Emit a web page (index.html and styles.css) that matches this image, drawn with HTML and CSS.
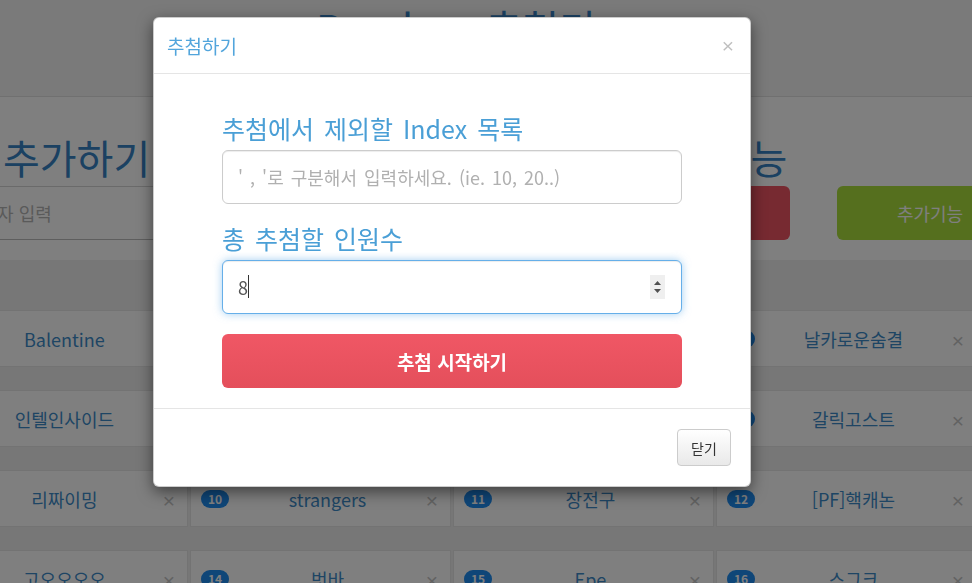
FILE: index.html
```html
<!DOCTYPE html>
<html lang="ko">
<head>
<meta charset="utf-8">
<title>Random 추첨기</title>
<link rel="stylesheet" href="styles.css">
</head>
<body>
<div class="page">
  <header class="top">
    <h1 class="title">Random 추첨기</h1>
  </header>
  <section class="controls">
    <div class="col-left">
      <h2 class="sec-title add-title">추가하기</h2>
      <input class="name-input" type="text" placeholder="참가자 입력">
    </div>
    <div class="col-right">
      <h2 class="sec-title extra-title">부가기능</h2>
      <div class="btn-row">
        <button class="btn-red" type="button">추첨하기</button>
        <button class="btn-green" type="button">추가기능</button>
      </div>
    </div>
  </section>
  <section class="list">
    <div class="grid">
      <div class="card"><span class="badge">1</span><span class="name">Balentine</span><span class="x">×</span></div>
      <div class="card"><span class="badge">2</span><span class="name">하늘바람</span><span class="x">×</span></div>
      <div class="card"><span class="badge">3</span><span class="name">달빛소나타</span><span class="x">×</span></div>
      <div class="card"><span class="badge">4</span><span class="name">날카로운숨결</span><span class="x">×</span></div>
      <div class="card"><span class="badge">5</span><span class="name">인텔인사이드</span><span class="x">×</span></div>
      <div class="card"><span class="badge">6</span><span class="name">초코우유</span><span class="x">×</span></div>
      <div class="card"><span class="badge">7</span><span class="name">바나나킥</span><span class="x">×</span></div>
      <div class="card"><span class="badge">8</span><span class="name">갈릭고스트</span><span class="x">×</span></div>
      <div class="card"><span class="badge">9</span><span class="name">리짜이밍</span><span class="x">×</span></div>
      <div class="card"><span class="badge">10</span><span class="name">strangers</span><span class="x">×</span></div>
      <div class="card"><span class="badge">11</span><span class="name">장전구</span><span class="x">×</span></div>
      <div class="card"><span class="badge">12</span><span class="name">[PF]핵캐논</span><span class="x">×</span></div>
      <div class="card"><span class="badge">13</span><span class="name">고오오오오</span><span class="x">×</span></div>
      <div class="card"><span class="badge">14</span><span class="name">벗바</span><span class="x">×</span></div>
      <div class="card"><span class="badge">15</span><span class="name">Epe</span><span class="x">×</span></div>
      <div class="card"><span class="badge">16</span><span class="name">스그크</span><span class="x">×</span></div>
    </div>
  </section>
</div>

<div class="backdrop"></div>

<div class="modal">
  <div class="modal-header">
    <span class="modal-title">추첨하기</span>
    <span class="modal-close">×</span>
  </div>
  <div class="modal-body">
    <div class="form">
      <label class="form-label">추첨에서 제외할 Index 목록</label>
      <input class="form-input" type="text" placeholder="' , '로 구분해서 입력하세요. (ie. 10, 20..)">
      <label class="form-label label-2">총 추첨할 인원수</label>
      <div class="num-wrap">
        <input class="form-input focused" type="text" value="8">
        <span class="caret"></span>
        <span class="spinner">
          <svg width="15" height="24" viewBox="0 0 15 24"><path d="M4 10 L7.5 6 L11 10 Z" fill="#505050"/><path d="M4 14 L11 14 L7.5 18 Z" fill="#505050"/></svg>
        </span>
      </div>
      <button class="btn-start" type="button">추첨 시작하기</button>
    </div>
  </div>
  <div class="modal-footer">
    <button class="btn-close" type="button">닫기</button>
  </div>
</div>
</body>
</html>
```

FILE: styles.css
```css
* { box-sizing: border-box; }

html, body {
  margin: 0;
  padding: 0;
  width: 972px;
  height: 583px;
  overflow: hidden;
  background: #fff;
  font-family: "Noto Sans CJK KR", "Noto Sans", sans-serif;
}

.page {
  margin-left: -74px;
  width: 1100px;
}

/* header */
.top {
  height: 97px;
  background: #f4f4f4;
  border-bottom: 1px solid #e0e0e0;
  padding-top: 2px;
  padding-left: 10px;
  width: 1050px;
}
.title {
  margin: 0;
  font-size: 40px;
  line-height: 50px;
  font-weight: 400;
  color: #3683c4;
  text-align: center;
}

/* controls */
.controls {
  display: flex;
  padding-top: 35px;
  padding-bottom: 20px;
}
.col-left {
  width: 678px;
  padding-left: 25px;
}
.col-right {
  flex: 1;
}
.sec-title {
  margin: 0;
  font-size: 40px;
  line-height: 50px;
  font-weight: 400;
  color: #3683c4;
}
.add-title { padding-left: 52px; }
.extra-title {
  padding-left: 24px;
  letter-spacing: 4px;
}

.name-input {
  display: block;
  margin-top: 4px;
  width: 600px;
  height: 54px;
  border: 1px solid #d4d4d4;
  border-bottom-color: #bcbcbc;
  padding: 0 12px;
  font-family: inherit;
  font-size: 18px;
  outline: none;
}
.name-input::placeholder { color: #b4b4b4; }

.btn-row {
  margin-top: 4px;
  display: grid;
  grid-template-columns: 186px 186px;
  column-gap: 47px;
}
.btn-red, .btn-green {
  height: 54px;
  border: none;
  border-radius: 6px;
  color: #fff;
  font-family: inherit;
  font-size: 18px;
}
.btn-red { background: #ef5462; }
.btn-green { background: #aade3d; }

/* list */
.list {
  background: #eeeeee;
  padding-top: 50px;
  padding-left: 1px;
}
.grid {
  display: grid;
  grid-template-columns: repeat(4, 261px);
  column-gap: 2px;
  row-gap: 23px;
}
.card {
  height: 57px;
  background: #fff;
  border: 1px solid #e6e6e6;
  display: flex;
  align-items: center;
  padding: 0 12px 0 10px;
}
.badge {
  min-width: 28px;
  height: 18px;
  padding: 0 7px;
  border-radius: 9px;
  background: #1e8cf0;
  color: #fff;
  font-size: 12px;
  font-weight: 700;
  line-height: 18px;
  text-align: center;
}
.name {
  flex: 1;
  text-align: center;
  font-size: 18px;
  line-height: 24px;
  color: #3d8bc9;
}
.x {
  font-family: "Liberation Sans", Arial, sans-serif;
  font-size: 21px;
  font-weight: 400;
  line-height: 24px;
  color: #c4c4c4;
  margin-top: 4px;
}

/* overlay */
.backdrop {
  position: fixed;
  inset: 0;
  background: rgba(0, 0, 0, 0.5);
}

.modal {
  position: absolute;
  left: 153px;
  top: 17px;
  width: 598px;
  background: #fff;
  border: 1px solid rgba(0, 0, 0, 0.2);
  border-radius: 6px;
  box-shadow: 0 5px 15px rgba(0, 0, 0, 0.5);
}
.modal-header {
  display: flex;
  justify-content: space-between;
  align-items: center;
  padding: 15px 16px 15px 13px;
  border-bottom: 1px solid #e5e5e5;
  height: 56px;
}
.modal-title {
  font-size: 19px;
  line-height: 25px;
  color: #52a5dc;
}
.modal-close {
  font-family: "Liberation Sans", Arial, sans-serif;
  font-size: 21px;
  font-weight: 400;
  line-height: 25px;
  color: #000;
  opacity: 0.25;
}
.modal-body {
  padding: 37px 0 20px;
  border-bottom: 1px solid #e5e5e5;
}
.form {
  width: 460px;
  margin: 0 auto;
  display: flex;
  flex-direction: column;
}
.form-label {
  font-size: 25px;
  line-height: 34px;
  word-spacing: 3px;
  color: #4a9fd6;
}
.label-2 { margin-top: 17px; }
.form-input {
  display: block;
  width: 460px;
  height: 54px;
  margin-top: 5px;
  border: 1px solid #cccccc;
  border-radius: 6px;
  padding: 0 15px;
  font-family: inherit;
  font-size: 18px;
  word-spacing: 2px;
  color: #555;
  outline: none;
  box-shadow: inset 0 1px 1px rgba(0, 0, 0, 0.075);
}
.form-input::placeholder { color: #b0b0b0; }
.form-input.focused {
  border-color: #66afe9;
  box-shadow: inset 0 1px 1px rgba(0, 0, 0, 0.075), 0 0 8px rgba(102, 175, 233, 0.6);
}
.num-wrap {
  position: relative;
}
.caret {
  position: absolute;
  left: 26px;
  top: 20px;
  width: 1px;
  height: 23px;
  background: #333;
}
.spinner {
  position: absolute;
  right: 17px;
  top: 20px;
  width: 15px;
  height: 24px;
  background: #efefef;
  display: flex;
}
.btn-start {
  margin-top: 20px;
  height: 54px;
  width: 460px;
  border: none;
  border-radius: 6px;
  background: linear-gradient(to bottom, #f05765, #e44f5b);
  color: #fff;
  font-family: inherit;
  font-size: 19px;
  font-weight: 700;
}
.modal-footer {
  padding: 20px 19px 20px;
  display: flex;
  justify-content: flex-end;
}
.btn-close {
  height: 37px;
  width: 54px;
  padding: 0;
  border: 1px solid #cccccc;
  border-radius: 4px;
  background: linear-gradient(to bottom, #ffffff, #e9e9e9);
  color: #333;
  font-family: inherit;
  font-size: 14px;
}
```
